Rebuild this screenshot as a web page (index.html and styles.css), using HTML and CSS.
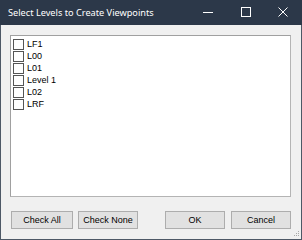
FILE: index.html
```html
<!DOCTYPE html>
<html>
<head>
<meta charset="utf-8">
<link rel="stylesheet" href="styles.css">
</head>
<body>
<div class="window">
  <div class="titlebar">
    <span class="title">Select Levels to Create Viewpoints</span>
    <div class="caption">
      <span class="cbtn"><svg width="10" height="10" viewBox="0 0 10 10"><path d="M0 5.5H10" stroke="#fff" stroke-width="1"/></svg></span>
      <span class="cbtn"><svg width="10" height="10" viewBox="0 0 10 10"><rect x="0.5" y="0.5" width="9" height="9" fill="none" stroke="#fff" stroke-width="1"/></svg></span>
      <span class="cbtn"><svg width="10" height="10" viewBox="0 0 10 10"><path d="M0.5 0.5L9.5 9.5M9.5 0.5L0.5 9.5" stroke="#fff" stroke-width="1"/></svg></span>
    </div>
  </div>
  <div class="client">
    <div class="listbox">
      <div class="item"><span class="box"></span><span class="label">LF1</span></div>
      <div class="item"><span class="box"></span><span class="label">L00</span></div>
      <div class="item"><span class="box"></span><span class="label">L01</span></div>
      <div class="item"><span class="box"></span><span class="label">Level 1</span></div>
      <div class="item"><span class="box"></span><span class="label">L02</span></div>
      <div class="item"><span class="box"></span><span class="label">LRF</span></div>
    </div>
    <div class="buttons">
      <div class="group">
        <button class="btn wide">Check All</button>
        <button class="btn">Check None</button>
      </div>
      <div class="group">
        <button class="btn">OK</button>
        <button class="btn">Cancel</button>
      </div>
    </div>
    <svg class="grip" width="6" height="6" viewBox="0 0 6 6">
      <rect x="4" y="0" width="1" height="1" fill="#a8a8a8"/>
      <rect x="2" y="2" width="1" height="1" fill="#a8a8a8"/>
      <rect x="4" y="2" width="1" height="1" fill="#a8a8a8"/>
      <rect x="0" y="4" width="1" height="1" fill="#a8a8a8"/>
      <rect x="2" y="4" width="1" height="1" fill="#a8a8a8"/>
      <rect x="4" y="4" width="1" height="1" fill="#a8a8a8"/>
    </svg>
  </div>
</div>
</body>
</html>
```
FILE: styles.css
```css
html, body {
  margin: 0;
  padding: 0;
  width: 302px;
  height: 240px;
  overflow: hidden;
}
.window {
  box-sizing: border-box;
  width: 302px;
  height: 240px;
  border: 1px solid #4d5866;
  border-top: none;
  background: #f0f0f0;
  display: flex;
  flex-direction: column;
}
.titlebar {
  height: 25px;
  margin: 0 -1px;
  background: #2c3849;
  display: flex;
  align-items: center;
  justify-content: space-between;
  flex-shrink: 0;
}
.title {
  padding-left: 8px;
  color: #fff;
  font-family: "Noto Sans", sans-serif;
  font-size: 9.2px;
  padding-bottom: 1px;
}
.caption {
  display: flex;
  height: 25px;
}
.cbtn {
  width: 37.5px;
  height: 25px;
  display: flex;
  align-items: center;
  justify-content: center;
}
.cbtn svg {
  display: block;
  margin-top: -1px;
}
.client {
  position: relative;
  flex: 1;
  display: flex;
  flex-direction: column;
  padding: 10px 10px 0 9px;
}
.listbox {
  height: 162px;
  box-sizing: border-box;
  background: #fff;
  border: 1px solid #a0a0a0;
  border-right-color: #b4b4b4;
  border-bottom-color: #b4b4b4;
  padding: 2px 0 0 2px;
  font-family: "Liberation Sans", Arial, sans-serif;
  font-size: 9px;
  color: #000;
}
.item {
  height: 12px;
  display: flex;
  align-items: center;
}
.box {
  box-sizing: border-box;
  width: 11px;
  height: 11px;
  border: 1px solid #555;
  background: #fff;
  margin-right: 3px;
}
.label {
  line-height: 12px;
}
.buttons {
  margin-top: 14px;
  display: flex;
  justify-content: space-between;
  padding-left: 1px;
}
.group {
  display: flex;
  gap: 6px;
}
.group:first-child {
  gap: 5px;
}
.btn {
  box-sizing: border-box;
  width: 60px;
  height: 18px;
  margin: 0;
  padding: 0;
  background: #e1e1e1;
  border: 1px solid #adadad;
  border-radius: 0;
  font-family: "Liberation Sans", Arial, sans-serif;
  font-size: 9px;
  color: #000;
}
.btn.wide {
  width: 62px;
}
.grip {
  position: absolute;
  right: 1px;
  bottom: 2px;
}
```
